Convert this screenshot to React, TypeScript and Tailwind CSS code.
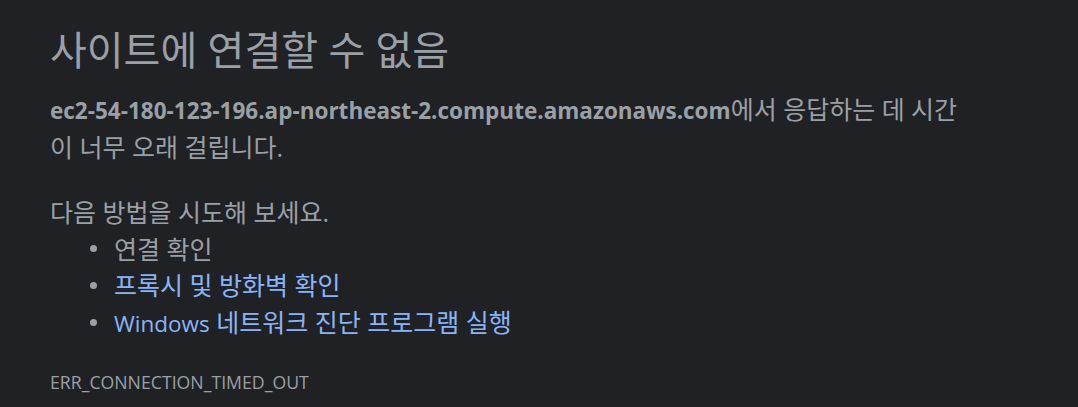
import React from "react";

const font = { fontFamily: '"Open Sans", "Noto Sans CJK KR", sans-serif' };

export default function App() {
  return (
    <div
      className="min-h-screen w-full bg-[#202124] text-[#9aa0a6] pl-[50px] pt-[27px] pb-[20px]"
      style={font}
    >
      <h1 className="text-[40px] leading-[46px] font-normal text-[#9aa0a6]">
        사이트에 연결할 수 없음
      </h1>
      <p className="mt-[18px] text-[25px] leading-[37px]">
        <span className="font-bold text-[22.5px]">ec2-54-180-123-196.ap-northeast-2.compute.amazonaws.com</span>
        에서 응답하는 데 시간
        <br />이 너무 오래 걸립니다.
      </p>
      <p className="mt-[28px] text-[25px] leading-[36.5px]">다음 방법을 시도해 보세요.</p>
      <ul className="text-[25px] leading-[36.5px]">
        <li className="flex items-center">
          <span className="ml-[40px] mr-[17px] h-[7px] w-[7px] rounded-full bg-[#9aa0a6]" />
          <span>연결 확인</span>
        </li>
        <li className="flex items-center">
          <span className="ml-[40px] mr-[17px] h-[7px] w-[7px] rounded-full bg-[#9aa0a6]" />
          <span className="text-[#8ab4f8]">프록시 및 방화벽 확인</span>
        </li>
        <li className="flex items-center">
          <span className="ml-[40px] mr-[17px] h-[7px] w-[7px] rounded-full bg-[#9aa0a6]" />
          <span className="text-[#8ab4f8]">
            <span className="text-[22.5px]">Windows</span> 네트워크 진단 프로그램 실행
          </span>
        </li>
      </ul>
      <div className="mt-[27px] text-[17.7px] leading-[27px]">ERR_CONNECTION_TIMED_OUT</div>
    </div>
  );
}
